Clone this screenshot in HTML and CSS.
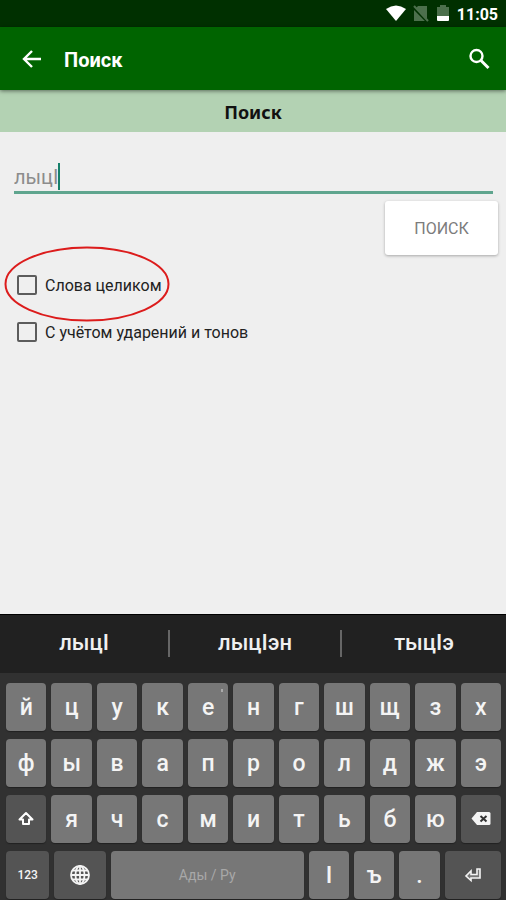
FILE: index.html
```html
<!DOCTYPE html>
<html lang="ru">
  <head>
    <meta charset="UTF-8" />
    <meta name="viewport" content="width=device-width, initial-scale=1.0" />
    <title>Поиск</title>
    <link rel="stylesheet" href="styles.css" />
  </head>
  <body>
    <div class="status_bar">
      <svg width="20" height="17" viewBox="0 0 20 17">
        <path d="M0 4Q10-3 20 4L10 16Z" fill="#fff" />
      </svg>
      <svg width="16" height="17" viewBox="0 0 16 17">
        <path d="M5 1h9v15H1V5z" fill="#4c704c" />
        <path d="M0 2l15 15" stroke="#003000" stroke-width="3" />
        <path d="M1 1l14 15" stroke="#4c704c" stroke-width="2" />
      </svg>
      <svg class="battery" width="12" height="17" viewBox="0 0 12 17">
        <path d="M0 2h3V0h6v2h3v9H0z" fill="#4c704c" />
        <path d="M0 11h12v4q0 1-1 1H1q-1 0-1-1z" fill="#fff" />
      </svg>
      <span class="clock">11:05</span>
    </div>

    <header class="app_bar">
      <button class="icon_button" type="button" aria-label="Назад">
        <svg width="20" height="20" viewBox="0 0 20 20">
          <path d="M19 10H3M10 2L2 10l8 8" fill="none" stroke="#fff" stroke-width="2.400" />
        </svg>
      </button>
      <h1 class="app_title">Поиск</h1>
      <button class="icon_button" type="button" aria-label="Искать">
        <svg width="22" height="22" viewBox="0 0 22 22">
          <circle cx="8.500" cy="8" r="6" fill="none" stroke="#fff" stroke-width="2.400" />
          <path d="M13 12.500l7.500 7.500" stroke="#fff" stroke-width="3" />
        </svg>
      </button>
    </header>

    <h2 class="section_title">Поиск</h2>

    <main class="content">
      <form>
        <div class="field">
          <input class="query" type="text" value="лыцӀ" aria-label="Слово для поиска" />
          <span class="caret"></span>
        </div>
        <div class="actions">
          <button class="search_button" type="button">ПОИСК</button>
        </div>
        <div class="option">
          <input type="checkbox" id="whole" />
          <label for="whole">Слова целиком</label>
          <svg class="mark" width="166" height="76" viewBox="0 0 166 76">
            <ellipse cx="83" cy="38" rx="81.500" ry="36.500" fill="none" stroke="#dc1c1c" stroke-width="2" />
          </svg>
        </div>
        <div class="option">
          <input type="checkbox" id="accents" />
          <label for="accents">С учётом ударений и тонов</label>
        </div>
      </form>
    </main>

    <div class="keyboard">
      <div class="suggestions">
        <button type="button">лыцӀ</button>
        <button type="button">лыцӀэн</button>
        <button type="button">тыцӀэ</button>
      </div>
      <div class="keys">
        <div class="row">
          <button class="key" type="button">й</button>
          <button class="key" type="button">ц</button>
          <button class="key" type="button">у</button>
          <button class="key" type="button">к</button>
          <button class="key key_hint" type="button">е</button>
          <button class="key" type="button">н</button>
          <button class="key" type="button">г</button>
          <button class="key" type="button">ш</button>
          <button class="key" type="button">щ</button>
          <button class="key" type="button">з</button>
          <button class="key" type="button">х</button>
        </div>
        <div class="row">
          <button class="key" type="button">ф</button>
          <button class="key" type="button">ы</button>
          <button class="key" type="button">в</button>
          <button class="key" type="button">а</button>
          <button class="key" type="button">п</button>
          <button class="key" type="button">р</button>
          <button class="key" type="button">о</button>
          <button class="key" type="button">л</button>
          <button class="key" type="button">д</button>
          <button class="key" type="button">ж</button>
          <button class="key" type="button">э</button>
        </div>
        <div class="row">
          <button class="key key_dark" type="button" aria-label="Shift">
            <svg width="16" height="16" viewBox="0 0 16 16">
              <path d="M8 2L1.500 8.500h3.500V13h6V8.500h3.500z" fill="none" stroke="#fff" stroke-width="2" stroke-linejoin="round" />
            </svg>
          </button>
          <button class="key" type="button">я</button>
          <button class="key" type="button">ч</button>
          <button class="key" type="button">с</button>
          <button class="key" type="button">м</button>
          <button class="key" type="button">и</button>
          <button class="key" type="button">т</button>
          <button class="key" type="button">ь</button>
          <button class="key" type="button">б</button>
          <button class="key" type="button">ю</button>
          <button class="key key_dark" type="button" aria-label="Стереть">
            <svg width="20" height="16" viewBox="0 0 20 16">
              <path d="M6 1h12q1.500 0 1.500 1.500v10q0 1.500-1.500 1.500H6L.5 7.500z" fill="#f4f4f4" />
              <path d="M9.500 5l6 5.500M15.500 5l-6 5.500" stroke="#333" stroke-width="2" />
            </svg>
          </button>
        </div>
        <div class="row row_last">
          <button class="key key_dark key_small" type="button">123</button>
          <button class="key key_dark" type="button" aria-label="Язык">
            <svg width="20" height="20" viewBox="0 0 20 20" fill="none" stroke="#f4f4f4" stroke-width="1.800">
              <circle cx="10" cy="10" r="9" />
              <ellipse cx="10" cy="10" rx="4.500" ry="9" />
              <path d="M10 1v18M1 10h18M2.500 5.500h15M2.500 14.500h15" />
            </svg>
          </button>
          <button class="key key_space" type="button">Ады / Ру</button>
          <button class="key" type="button">Ӏ</button>
          <button class="key" type="button">ъ</button>
          <button class="key" type="button">.</button>
          <button class="key key_dark" type="button" aria-label="Ввод">
            <svg width="18" height="16" viewBox="0 0 18 16">
              <path d="M13 2v5.500H7V4L2 9l5 4.500V11h9V2z" fill="#777" stroke="#f4f4f4" stroke-width="1.600" />
            </svg>
          </button>
        </div>
      </div>
    </div>
  </body>
</html>
```
FILE: styles.css
```css
* {
  box-sizing: border-box;
}
body {
  margin: 0;
  min-height: 100vh;
  display: flex;
  flex-direction: column;
  background: #efefef;
  font-family: Roboto, "Noto Sans", sans-serif;
  color: #222;
}
button {
  border: none;
  padding: 0;
  font-family: inherit;
}
svg {
  display: block;
}

.status_bar {
  display: flex;
  align-items: center;
  justify-content: flex-end;
  height: 27px;
  padding: 0 8px;
  background: #003000;
}
.status_bar svg + svg {
  margin-left: 7px;
}
.status_bar .battery {
  margin-right: 8px;
}
.status_bar svg + .battery {
  margin-left: 8px;
}
.clock {
  color: #fff;
  font-size: 16px;
  font-weight: 700;
  line-height: 27px;
  padding-top: 2px;
}

.app_bar {
  display: flex;
  align-items: center;
  height: 63px;
  padding: 0 16px 0 22px;
  background: #006400;
  box-shadow: 0 1px 4px rgba(0, 0, 0, 0.5);
  position: relative;
}
.icon_button {
  background: none;
}
.app_title {
  flex: 1;
  margin: 0;
  padding: 2px 0 0 22px;
  color: #fff;
  font-size: 20px;
  line-height: 24px;
  font-weight: 700;
}
.section_title {
  margin: 0;
  padding: 2px 0 0;
  background: #b3d2b3;
  color: #111;
  font-family: "Noto Sans", sans-serif;
  font-size: 18px;
  line-height: 40px;
  text-align: center;
}

.content {
  flex: 1;
  padding: 30px 8px 0 14px;
}
.field {
  position: relative;
  margin-right: 5px;
}
.query {
  display: block;
  width: 100%;
  height: 32px;
  padding: 0;
  border: none;
  border-bottom: 3px solid #5fa58e;
  background: none;
  color: #8c8c8c;
  font-family: inherit;
  font-size: 20px;
  outline: none;
}
.caret {
  position: absolute;
  left: 44px;
  bottom: 4px;
  width: 2px;
  height: 27px;
  background: #16806a;
}
.actions {
  display: flex;
  justify-content: flex-end;
  padding: 7px 0 6px;
}
.search_button {
  width: 113px;
  height: 54px;
  border-radius: 3px;
  background: #fff;
  box-shadow: 0 1px 3px rgba(0, 0, 0, 0.3);
  color: #7c7c7c;
  font-size: 16px;
}
.option {
  position: relative;
  display: flex;
  align-items: center;
  height: 47px;
  padding-left: 3px;
}
.option input {
  appearance: none;
  width: 20px;
  height: 20px;
  margin: 0 8px 0 0;
  border: 2px solid #5c5c5c;
  border-radius: 2px;
}
.option label {
  padding-top: 2px;
  font-size: 16px;
  line-height: 20px;
}
/* red ring over the first option */
.mark {
  position: absolute;
  left: -10px;
  top: -15px;
  pointer-events: none;
}

.keyboard {
  background: #313131;
  color: #f4f4f4;
}
.suggestions {
  display: grid;
  grid-template-columns: 168fr 172fr 166fr;
  align-items: center;
  height: 59px;
  padding-bottom: 2px;
  border-top: 1px solid #000;
  background: #212121;
}
.suggestions button {
  height: 27px;
  background: none;
  color: #f0f0f0;
  font-size: 22px;
  line-height: 26px;
  font-weight: 500;
}
.suggestions button + button {
  border-left: 2px solid #666;
}
.keys {
  display: grid;
  gap: 8px;
  padding: 10px 5px 1px 6px;
}
.row {
  display: grid;
  grid-template-columns: repeat(11, 1fr);
  gap: 5px;
}
.row_last {
  grid-template-columns: 43fr 51fr 192fr 40fr 40fr 40fr 56fr;
}
.key {
  display: flex;
  align-items: center;
  justify-content: center;
  height: 48px;
  border-radius: 4px;
  background: #777;
  box-shadow: 0 1px 1px #222;
  color: #f4f4f4;
  font-size: 23px;
  font-weight: 500;
}
.key_dark {
  background: #545454;
}
.key_small {
  font-size: 12px;
}
.key_space {
  color: #a8a8a8;
  font-size: 14px;
  font-weight: 400;
}
.key_hint {
  position: relative;
}
.key_hint::after {
  content: "";
  position: absolute;
  top: 6px;
  right: 5px;
  width: 2px;
  height: 3px;
  background: #aaa;
}
```
